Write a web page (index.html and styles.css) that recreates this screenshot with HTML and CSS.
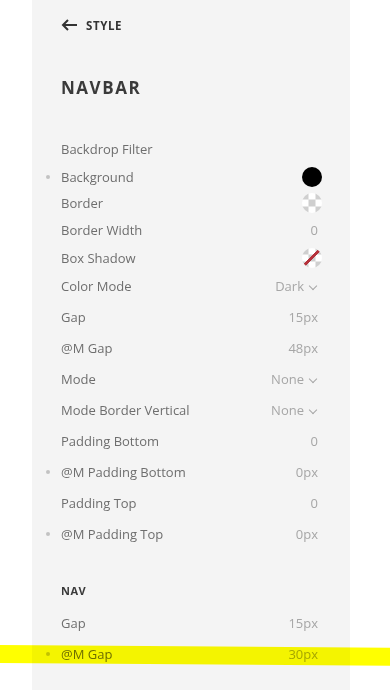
FILE: index.html
```html
<!DOCTYPE html>
<html lang="en">
<head>
    <meta charset="UTF-8">
    <meta name="viewport" content="width=device-width, initial-scale=1.0">
    <title>Style - Navbar</title>
    <link rel="stylesheet" href="styles.css">
</head>
<body>
    <div class="panel">
        <a class="back" href="#">
            <svg width="17" height="12" viewBox="0 0 17 12"><path d="M16 6H2M7 1L2 6l5 5" fill="none" stroke="#333" stroke-width="2"/></svg>
            <span>Style</span>
        </a>

        <h1 class="title">Navbar</h1>

        <div class="group compact">
            <div class="row"><i></i><span class="label">Backdrop Filter</span><span></span></div>
            <div class="row swatch-row"><i class="dot"></i><span class="label">Background</span><span class="swatch black"></span></div>
            <div class="row swatch-row short"><i></i><span class="label">Border</span><span class="swatch checker"></span></div>
            <div class="row"><i></i><span class="label">Border Width</span><span class="value">0</span></div>
            <div class="row swatch-row"><i></i><span class="label">Box Shadow</span><span class="swatch checker none"></span></div>
            <div class="row"><i></i><span class="label">Color Mode</span><span class="value select">Dark</span></div>
        </div>

        <div class="group">
            <div class="row"><i></i><span class="label">Gap</span><span class="value">15px</span></div>
            <div class="row"><i></i><span class="label">@M Gap</span><span class="value">48px</span></div>
            <div class="row"><i></i><span class="label">Mode</span><span class="value select">None</span></div>
            <div class="row"><i></i><span class="label">Mode Border Vertical</span><span class="value select">None</span></div>
            <div class="row"><i></i><span class="label">Padding Bottom</span><span class="value">0</span></div>
            <div class="row"><i class="dot"></i><span class="label">@M Padding Bottom</span><span class="value">0px</span></div>
            <div class="row"><i></i><span class="label">Padding Top</span><span class="value">0</span></div>
            <div class="row"><i class="dot"></i><span class="label">@M Padding Top</span><span class="value">0px</span></div>
        </div>

        <h2 class="subtitle">Nav</h2>

        <div class="group">
            <div class="row"><i></i><span class="label">Gap</span><span class="value">15px</span></div>
            <div class="row"><i class="dot"></i><span class="label">@M Gap</span><span class="value">30px</span></div>
        </div>
    </div>

    <div class="highlight"></div>
</body>
</html>
```

FILE: styles.css
```css
body {
    margin: 0;
    background: #fff;
    font-family: "Open Sans", Arial, sans-serif;
    color: #333;
}
.panel {
    margin-left: 32px;
    width: 318px;
    min-height: 690px;
    box-sizing: border-box;
    padding: 0 32px 1px 14px;
    background: #f4f4f4;
}
.back {
    display: flex;
    align-items: center;
    height: 50px;
    padding-left: 15px;
    color: #333;
    text-decoration: none;
    font-size: 11.5px;
    font-weight: 700;
    letter-spacing: 0.05em;
    text-transform: uppercase;
}
.back svg {
    margin-right: 8px;
}
.title {
    margin: 26px 0 34px 15px;
    font-size: 17px;
    line-height: 24px;
    font-weight: 700;
    letter-spacing: 0.09em;
    text-transform: uppercase;
    color: #3a3a3a;
}
.subtitle {
    margin: 34px 0 8px 15px;
    font-size: 11px;
    line-height: 16px;
    font-weight: 700;
    letter-spacing: 0.04em;
    text-transform: uppercase;
    color: #3a3a3a;
}
.row {
    display: grid;
    grid-template-columns: 15px 1fr auto;
    align-items: center;
    height: 31px;
    font-size: 13px;
}
.compact .row {
    height: 30px;
}
.compact .swatch-row {
    height: 26px;
}
.compact .short {
    height: 25px;
}
.row i {
    width: 4px;
    height: 4px;
}
.row .dot {
    border-radius: 50%;
    background: #c2c2c2;
}
.label {
    color: #6e6e6e;
}
.value {
    color: #a6a6a6;
}
.select::after {
    content: "";
    display: inline-block;
    width: 5px;
    height: 5px;
    margin: 0 2px 3px 6px;
    border-right: 1.8px solid #a6a6a6;
    border-bottom: 1.8px solid #a6a6a6;
    transform: rotate(45deg);
    vertical-align: middle;
}
.swatch {
    width: 20px;
    height: 20px;
    margin-right: -4px;
    border-radius: 50%;
}
.swatch.black {
    background: #000;
}
.swatch.checker {
    background: conic-gradient(#fff 0 25%, #cfcfcf 0 50%, #fff 0 75%, #cfcfcf 0) -0.5px -0.5px / 14px 14px;
}
.swatch.none {
    background:
        linear-gradient(to bottom right, transparent 45%, #b5323c 45%, #b5323c 55%, transparent 55%),
        conic-gradient(#fff 0 25%, #cfcfcf 0 50%, #fff 0 75%, #cfcfcf 0) -0.5px -0.5px / 14px 14px;
}
.highlight {
    position: absolute;
    left: 0;
    top: 645px;
    width: 390px;
    height: 18px;
    background: #ffff00;
    mix-blend-mode: multiply;
    transform: skewY(0.4deg);
    transform-origin: left top;
}
```
